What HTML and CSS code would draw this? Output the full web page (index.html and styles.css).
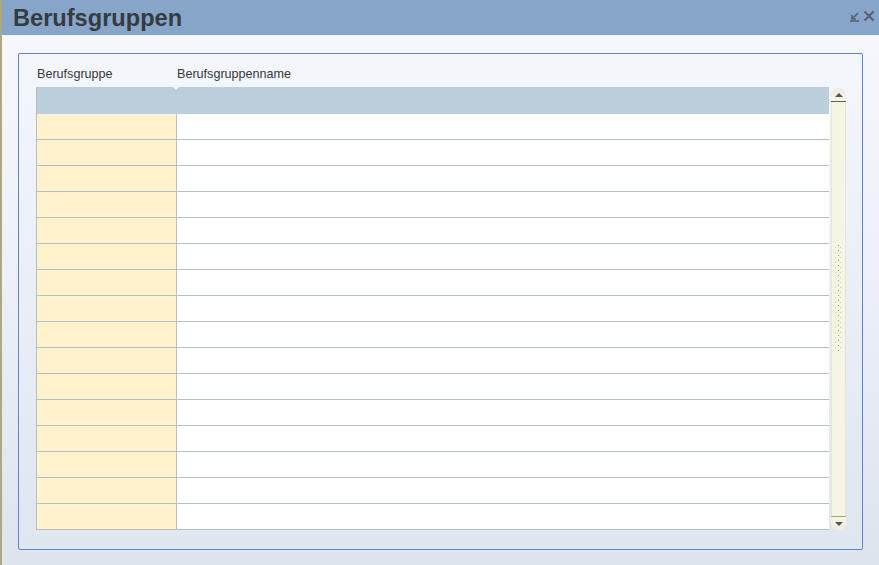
FILE: index.html
```html
<!DOCTYPE html>
<html>
<head>
<meta charset="utf-8">
<link rel="stylesheet" href="styles.css">
</head>
<body>
<div class="window">
  <div class="titlebar">
    <div class="title">Berufsgruppen</div>
    <div class="tools">
      <svg class="ico" width="11" height="11" viewBox="0 0 11 11"><path d="M9 2 L3.5 7.5 M3 4 V8 H7 M1 10 H10" stroke="#56606c" stroke-width="1.6" fill="none"/></svg>
      <svg class="ico" width="12" height="12" viewBox="0 0 12 12"><path d="M1.5 1.5 L10.5 10.5 M10.5 1.5 L1.5 10.5" stroke="#56606c" stroke-width="2" fill="none"/></svg>
    </div>
  </div>
  <div class="content">
    <div class="panel">
      <div class="labels">
        <div class="lab lab1">Berufsgruppe</div>
        <div class="lab">Berufsgruppenname</div>
      </div>
      <div class="gridwrap">
        <div class="grid">
          <div class="hrow"><div class="hc1"></div><div class="hc2"></div></div>
          <div class="row"><div class="c1"></div><div class="c2"></div></div>
          <div class="row"><div class="c1"></div><div class="c2"></div></div>
          <div class="row"><div class="c1"></div><div class="c2"></div></div>
          <div class="row"><div class="c1"></div><div class="c2"></div></div>
          <div class="row"><div class="c1"></div><div class="c2"></div></div>
          <div class="row"><div class="c1"></div><div class="c2"></div></div>
          <div class="row"><div class="c1"></div><div class="c2"></div></div>
          <div class="row"><div class="c1"></div><div class="c2"></div></div>
          <div class="row"><div class="c1"></div><div class="c2"></div></div>
          <div class="row"><div class="c1"></div><div class="c2"></div></div>
          <div class="row"><div class="c1"></div><div class="c2"></div></div>
          <div class="row"><div class="c1"></div><div class="c2"></div></div>
          <div class="row"><div class="c1"></div><div class="c2"></div></div>
          <div class="row"><div class="c1"></div><div class="c2"></div></div>
          <div class="row"><div class="c1"></div><div class="c2"></div></div>
          <div class="row"><div class="c1"></div><div class="c2"></div></div>
        </div>
        <div class="scroll">
          <div class="sbtn up"><span class="tri-up"></span></div>
          <div class="track"><div class="grip"></div></div>
          <div class="sbtn down"><span class="tri-down"></span></div>
        </div>
      </div>
    </div>
  </div>
</div>
</body>
</html>
```
FILE: styles.css
```css
html, body {
  margin: 0;
  padding: 0;
}
body {
  width: 879px;
  height: 565px;
  overflow: hidden;
  font-family: "Liberation Sans", Arial, sans-serif;
}
.window {
  width: 879px;
  height: 565px;
  display: flex;
  flex-direction: column;
  box-sizing: border-box;
  border-left: 2px solid #aca97c;
}
.titlebar {
  height: 35px;
  flex: none;
  background: #86a5c8;
  display: flex;
  align-items: center;
  justify-content: space-between;
  padding: 0 4px 0 11px;
}
.title {
  font-size: 23.6px;
  font-weight: bold;
  color: #343b41;
  line-height: 35px;
  padding-top: 1px;
}
.tools {
  display: flex;
  align-items: center;
  gap: 3px;
  margin-top: -3px;
}
.ico { display: block; }
.content {
  flex: 1;
  background: linear-gradient(#f6f7fc 0%, #eef1f8 40%, #dde4ee 100%);
  padding: 18px 16px 15px 16px;
  display: flex;
}
.panel {
  flex: 1;
  border: 1px solid #5c86c4;
  border-radius: 2px;
  background: linear-gradient(#f4f6fc 0%, #e9eef7 50%, #dfe6f0 100%);
  padding: 12px 15px 19px 17px;
  display: flex;
  flex-direction: column;
}
.labels {
  height: 21px;
  display: flex;
  align-items: flex-start;
  font-size: 12.6px;
  line-height: 16px;
  color: #33383d;
}
.lab1 {
  width: 140px;
  padding-left: 1px;
}
.gridwrap {
  display: flex;
  gap: 2px;
}
.grid {
  width: 792px;
  border-left: 1px solid #b3bcc8;
  background: #fff;
}
.hrow {
  height: 27px;
  display: flex;
  background: #bccddc;
}
.hc1 {
  width: 139px;
  position: relative;
}
.hc1::after {
  content: "";
  position: absolute;
  right: -3px;
  top: 0;
  border-left: 3px solid transparent;
  border-right: 3px solid transparent;
  border-top: 3px solid #f2f5f9;
}
.row {
  height: 25px;
  display: flex;
  border-bottom: 1px solid #b6bec9;
}
.c1 {
  width: 139px;
  background: #fff2cd;
  border-right: 1px solid #b6bec9;
}
.c2 { flex: 1; }
.scroll {
  width: 15px;
  margin-top: 1px;
  background: #f6f4e2;
  border-radius: 7px;
  overflow: hidden;
  display: flex;
  flex-direction: column;
  box-shadow: inset 0 0 0 1px #e8e6cc;
}
.sbtn {
  height: 13px;
  display: flex;
  align-items: center;
  justify-content: center;
  flex: none;
}
.up {
  border-bottom: 1px solid #5e625a;
  border-radius: 7px 7px 0 0;
  background: linear-gradient(#ecebdc, #f8f6e6);
}
.down {
  border-top: 1px solid #a5a964;
  border-radius: 0 0 7px 7px;
  background: linear-gradient(#f8f6e6, #ecebdc);
}
.tri-up {
  border-left: 4px solid transparent;
  border-right: 4px solid transparent;
  border-bottom: 4px solid #4e5560;
}
.tri-down {
  border-left: 4px solid transparent;
  border-right: 4px solid transparent;
  border-top: 4px solid #4e5560;
}
.track {
  flex: 1;
  padding-top: 141px;
}
.grip {
  margin-left: 4px;
  width: 8px;
  height: 108px;
  background-image:
    radial-gradient(circle, #9a9a68 0.7px, transparent 1px),
    radial-gradient(circle, #d2d2b0 0.7px, transparent 1px);
  background-size: 5px 5px, 5px 5px;
  background-position: 1px 0, 3px 2px;
}
```
